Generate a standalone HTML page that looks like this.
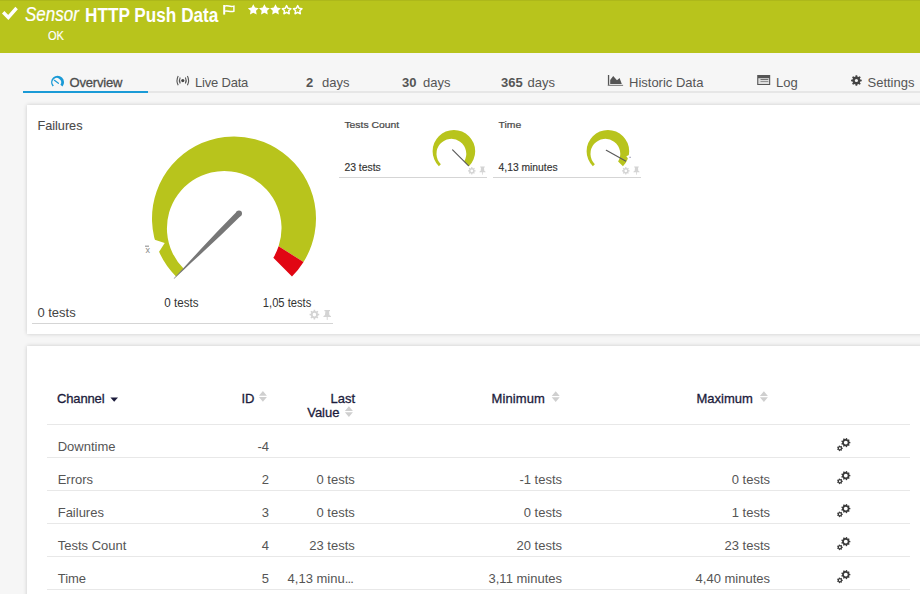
<!DOCTYPE html>
<html><head><meta charset="utf-8"><style>
html,body{margin:0;padding:0;width:920px;height:594px;overflow:hidden;background:#f6f6f6;position:relative}
.t{position:absolute;font-family:"Liberation Sans",sans-serif;white-space:nowrap}
.panel{position:absolute;background:#fff;box-shadow:0 0 4px rgba(0,0,0,0.18)}
</style></head><body>
<div style="position:absolute;left:0;top:0;width:920px;height:53px;background:#b8c41c;border-top:1px solid #adb81a;box-sizing:border-box"></div>
<svg style="position:absolute;left:0;top:0" width="920" height="600" viewBox="0 0 920 600"><path d="M3.2,12.3 L8.3,17.4 L16.6,8" fill="none" stroke="#fff" stroke-width="3.4"/><rect x="223.2" y="5" width="2" height="9.6" fill="#fff"/><path d="M224.8,6.1 C227.5,4.9 229.8,7.3 233.9,6.1 V11.2 C229.8,12.4 227.5,10.1 224.8,11.2" fill="none" stroke="#fff" stroke-width="1.45"/><path d="M253.30,4.20 L254.98,7.59 L258.72,8.14 L256.01,10.78 L256.65,14.51 L253.30,12.75 L249.95,14.51 L250.59,10.78 L247.88,8.14 L251.62,7.59 Z" fill="#fff"/><path d="M264.40,4.20 L266.08,7.59 L269.82,8.14 L267.11,10.78 L267.75,14.51 L264.40,12.75 L261.05,14.51 L261.69,10.78 L258.98,8.14 L262.72,7.59 Z" fill="#fff"/><path d="M275.50,4.20 L277.18,7.59 L280.92,8.14 L278.21,10.78 L278.85,14.51 L275.50,12.75 L272.15,14.51 L272.79,10.78 L270.08,8.14 L273.82,7.59 Z" fill="#fff"/><path d="M286.60,5.60 L287.92,8.28 L290.88,8.71 L288.74,10.80 L289.25,13.74 L286.60,12.35 L283.95,13.74 L284.46,10.80 L282.32,8.71 L285.28,8.28 Z" fill="none" stroke="#fff" stroke-width="1.5" stroke-linejoin="round"/><path d="M297.70,5.60 L299.02,8.28 L301.98,8.71 L299.84,10.80 L300.35,13.74 L297.70,12.35 L295.05,13.74 L295.56,10.80 L293.42,8.71 L296.38,8.28 Z" fill="none" stroke="#fff" stroke-width="1.5" stroke-linejoin="round"/></svg>
<div class="t" style="left:25.00px;top:7.21px;font-size:17px;line-height:17px;font-weight:400;color:#fff;font-style:italic;-webkit-text-stroke:0.2px #fff;transform:scale(1,1.14);transform-origin:0 14.39px;">Sensor</div>
<div class="t" style="left:85.00px;top:7.74px;font-size:17.2px;line-height:17.2px;font-weight:700;color:#fff;font-style:normal;transform:scale(1,1.14);transform-origin:0 14.56px;">HTTP Push Data</div>
<div class="t" style="left:48.00px;top:30.13px;font-size:12.6px;line-height:12.6px;font-weight:400;color:#fff;font-style:normal;-webkit-text-stroke:0.15px #fff;transform:scale(0.88,1);transform-origin:0 10.67px;">OK</div>
<div style="position:absolute;left:23px;top:91px;width:897px;height:2px;background:#e6e6e6"></div>
<div style="position:absolute;left:23px;top:91px;width:125px;height:2px;background:#1a9ad6"></div>
<div class="t" style="left:69.60px;top:76.00px;font-size:13px;line-height:13px;font-weight:400;color:#4d4d4d;font-style:normal;letter-spacing:-0.2px;-webkit-text-stroke:0.3px #4d4d4d;">Overview</div>
<div class="t" style="left:195.00px;top:76.00px;font-size:13px;line-height:13px;font-weight:400;color:#555;font-style:normal;letter-spacing:-0.2px;">Live Data</div>
<div class="t" style="left:306.00px;top:76.00px;font-size:13px;line-height:13px;font-weight:700;color:#555;font-style:normal;">2</div>
<div class="t" style="left:322.00px;top:76.00px;font-size:13px;line-height:13px;font-weight:400;color:#555;font-style:normal;">days</div>
<div class="t" style="left:402.00px;top:76.00px;font-size:13px;line-height:13px;font-weight:700;color:#555;font-style:normal;">30</div>
<div class="t" style="left:423.00px;top:76.00px;font-size:13px;line-height:13px;font-weight:400;color:#555;font-style:normal;">days</div>
<div class="t" style="left:501.00px;top:76.00px;font-size:13px;line-height:13px;font-weight:700;color:#555;font-style:normal;">365</div>
<div class="t" style="left:527.50px;top:76.00px;font-size:13px;line-height:13px;font-weight:400;color:#555;font-style:normal;">days</div>
<div class="t" style="left:629.00px;top:76.00px;font-size:13px;line-height:13px;font-weight:400;color:#555;font-style:normal;">Historic Data</div>
<div class="t" style="left:776.00px;top:76.00px;font-size:13px;line-height:13px;font-weight:400;color:#555;font-style:normal;">Log</div>
<div class="t" style="left:867.50px;top:76.00px;font-size:13px;line-height:13px;font-weight:400;color:#555;font-style:normal;">Settings</div>
<svg style="position:absolute;left:0;top:0" width="920" height="594" viewBox="0 0 920 594"><path d="M52.57,86.53 A6.50,6.50 0 1 1 62.53,86.53 L60.38,84.73 A4.30,4.30 0 1 0 53.84,85.47 Z" fill="#1a9ad6"/><line x1="54.4" y1="80.3" x2="58.4" y2="83.3" stroke="#1a9ad6" stroke-width="1.2" stroke-linecap="round"/><circle cx="182.8" cy="80.6" r="1.6" fill="#444"/><path d="M180.2,77.6 Q178.6,80.6 180.2,83.6 M185.4,77.6 Q187,80.6 185.4,83.6" fill="none" stroke="#555" stroke-width="1.1"/><path d="M178.2,76 Q175.8,80.6 178.2,85.2 M187.4,76 Q189.8,80.6 187.4,85.2" fill="none" stroke="#555" stroke-width="1.1"/><rect x="607.9" y="75" width="1.3" height="11" fill="#555"/><rect x="607.9" y="84.8" width="15.2" height="1.2" fill="#888"/><path d="M610.2,84 L610.2,80 L613.2,76 L617,80.2 L619.6,78 L621.8,84 Z" fill="#555"/><rect x="757.2" y="75" width="13" height="10" fill="#555"/><rect x="758.3" y="78.2" width="10.8" height="5.8" fill="#ddd"/><rect x="760.5" y="79" width="7.8" height="0.9" fill="#666"/><rect x="760.5" y="81" width="7.8" height="0.9" fill="#888"/><path d="M860.29,79.57 L861.73,79.66 L861.73,81.34 L860.29,81.43 L859.81,82.59 L860.77,83.67 L859.57,84.87 L858.49,83.91 L857.33,84.39 L857.24,85.83 L855.56,85.83 L855.47,84.39 L854.31,83.91 L853.23,84.87 L852.03,83.67 L852.99,82.59 L852.51,81.43 L851.07,81.34 L851.07,79.66 L852.51,79.57 L852.99,78.41 L852.03,77.33 L853.23,76.13 L854.31,77.09 L855.47,76.61 L855.56,75.17 L857.24,75.17 L857.33,76.61 L858.49,77.09 L859.57,76.13 L860.77,77.33 L859.81,78.41 Z M858.02,80.50 A1.62,1.62 0 1 0 854.78,80.50 A1.62,1.62 0 1 0 858.02,80.50 Z" fill="#444" fill-rule="evenodd"/></svg>
<div class="panel" style="left:27px;top:105px;width:920px;height:229px"></div>
<div class="panel" style="left:27px;top:346px;width:920px;height:300px"></div>
<div class="t" style="left:37.40px;top:120.25px;font-size:12.7px;line-height:12.7px;font-weight:400;color:#4a4a4a;font-style:normal;-webkit-text-stroke:0.1px #4a4a4a;">Failures</div>
<div class="t" style="left:37.40px;top:305.70px;font-size:13px;line-height:13px;font-weight:400;color:#444;font-style:normal;">0 tests</div>
<div class="t" style="left:164.30px;top:297.38px;font-size:11.6px;line-height:11.6px;font-weight:400;color:#333;font-style:normal;transform:scale(1,1.12);transform-origin:0 9.82px;">0 tests</div>
<div class="t" style="left:262.80px;top:297.72px;font-size:11.2px;line-height:11.2px;font-weight:400;color:#333;font-style:normal;transform:scale(1,1.15);transform-origin:0 9.48px;">1,05 tests</div>
<div style="position:absolute;left:32px;top:323px;width:301px;height:1px;background:#d5d5d5"></div>
<div class="t" style="left:344.40px;top:119.80px;font-size:10.4px;line-height:10.4px;font-weight:400;color:#4a4a4a;font-style:normal;-webkit-text-stroke:0.25px #4a4a4a;transform:scale(1,0.96);transform-origin:0 8.80px;">Tests Count</div>
<div class="t" style="left:344.40px;top:163.20px;font-size:10.4px;line-height:10.4px;font-weight:400;color:#333;font-style:normal;-webkit-text-stroke:0.15px #333;">23 tests</div>
<div style="position:absolute;left:339px;top:177px;width:148px;height:1px;background:#d5d5d5"></div>
<div class="t" style="left:498.60px;top:119.80px;font-size:10.4px;line-height:10.4px;font-weight:400;color:#4a4a4a;font-style:normal;-webkit-text-stroke:0.25px #4a4a4a;transform:scale(1,0.96);transform-origin:0 8.80px;">Time</div>
<div class="t" style="left:498.60px;top:163.28px;font-size:10.3px;line-height:10.3px;font-weight:400;color:#333;font-style:normal;-webkit-text-stroke:0.15px #333;">4,13 minutes</div>
<div style="position:absolute;left:493px;top:177px;width:148px;height:1px;background:#d5d5d5"></div>
<svg style="position:absolute;left:0;top:0" width="920" height="594" viewBox="0 0 920 594"><path d="M176.02,276.48 A82.00,82.00 0 1 1 303.54,261.95 L278.60,246.37 A57.30,57.30 0 1 0 183.72,268.78 Z" fill="#b8c41c"/><path d="M303.54,261.95 A82.00,82.00 0 0 1 291.98,276.48 L273.32,257.82 A57.30,57.30 0 0 0 278.60,246.37 Z" fill="#e10613"/><path d="M164.72,243.03 L150.88,238.40 L156.87,255.34 Z" fill="#fff"/><path d="M236.88,211.38 L218.09,230.87 L200.91,249.05 L189.38,261.56 L182.59,268.92 L173.68,278.39 L174.11,278.82 L183.58,269.91 L190.94,263.12 L203.45,251.59 L221.63,234.41 L241.12,215.62 Z" fill="#777"/><circle cx="239.00" cy="213.50" r="3.0" fill="#777"/><path d="M438.84,166.26 A21.30,21.30 0 1 1 468.96,166.26 L464.12,161.42 A14.89,14.89 0 1 0 440.84,164.26 Z" fill="#b8c41c"/><line x1="452.60" y1="149.90" x2="468.41" y2="165.71" stroke="#5a5a5a" stroke-width="1.15" stroke-linecap="round"/><path d="M592.84,166.26 A21.30,21.30 0 1 1 622.96,166.26 L618.12,161.42 A14.89,14.89 0 1 0 594.84,164.26 Z" fill="#b8c41c"/><path d="M626.30,156.30 L628.56,159.35 L629.80,154.85 Z" fill="#fff"/><line x1="606.30" y1="150.30" x2="625.57" y2="161.12" stroke="#5a5a5a" stroke-width="1.15" stroke-linecap="round"/><rect x="629.3" y="156.8" width="1.6" height="0.9" fill="#8a8aa8"/><path d="M317.93,313.75 L319.24,313.83 L319.24,315.37 L317.93,315.45 L317.49,316.49 L318.36,317.48 L317.28,318.56 L316.29,317.69 L315.25,318.13 L315.17,319.44 L313.63,319.44 L313.55,318.13 L312.51,317.69 L311.52,318.56 L310.44,317.48 L311.31,316.49 L310.87,315.45 L309.56,315.37 L309.56,313.83 L310.87,313.75 L311.31,312.71 L310.44,311.72 L311.52,310.64 L312.51,311.51 L313.55,311.07 L313.63,309.76 L315.17,309.76 L315.25,311.07 L316.29,311.51 L317.28,310.64 L318.36,311.72 L317.49,312.71 Z M316.11,314.60 A1.72,1.72 0 1 0 312.69,314.60 A1.72,1.72 0 1 0 316.11,314.60 Z" fill="#d4d4d4" fill-rule="evenodd"/><path d="M324.40,310.00 L330.00,310.00 L330.00,311.20 L329.00,311.20 L329.40,315.00 L331.00,316.20 L331.00,317.00 L327.70,317.00 L327.60,320.00 L326.80,320.00 L326.70,317.00 L323.40,317.00 L323.40,316.20 L325.00,315.00 L325.40,311.20 L324.40,311.20 Z" fill="#d4d4d4"/><path d="M474.53,170.14 L475.55,170.21 L475.55,171.39 L474.53,171.46 L474.20,172.27 L474.87,173.03 L474.03,173.87 L473.27,173.20 L472.46,173.53 L472.39,174.55 L471.21,174.55 L471.14,173.53 L470.33,173.20 L469.57,173.87 L468.73,173.03 L469.40,172.27 L469.07,171.46 L468.05,171.39 L468.05,170.21 L469.07,170.14 L469.40,169.33 L468.73,168.57 L469.57,167.73 L470.33,168.40 L471.14,168.07 L471.21,167.05 L472.39,167.05 L472.46,168.07 L473.27,168.40 L474.03,167.73 L474.87,168.57 L474.20,169.33 Z M473.13,170.80 A1.33,1.33 0 1 0 470.47,170.80 A1.33,1.33 0 1 0 473.13,170.80 Z" fill="#d4d4d4" fill-rule="evenodd"/><path d="M480.18,166.60 L484.78,166.60 L484.78,167.58 L483.96,167.58 L484.28,170.70 L485.60,171.68 L485.60,172.34 L482.89,172.34 L482.81,174.80 L482.15,174.80 L482.07,172.34 L479.36,172.34 L479.36,171.68 L480.68,170.70 L481.00,167.58 L480.18,167.58 Z" fill="#d4d4d4"/><path d="M628.53,170.14 L629.55,170.21 L629.55,171.39 L628.53,171.46 L628.20,172.27 L628.87,173.03 L628.03,173.87 L627.27,173.20 L626.46,173.53 L626.39,174.55 L625.21,174.55 L625.14,173.53 L624.33,173.20 L623.57,173.87 L622.73,173.03 L623.40,172.27 L623.07,171.46 L622.05,171.39 L622.05,170.21 L623.07,170.14 L623.40,169.33 L622.73,168.57 L623.57,167.73 L624.33,168.40 L625.14,168.07 L625.21,167.05 L626.39,167.05 L626.46,168.07 L627.27,168.40 L628.03,167.73 L628.87,168.57 L628.20,169.33 Z M627.13,170.80 A1.33,1.33 0 1 0 624.47,170.80 A1.33,1.33 0 1 0 627.13,170.80 Z" fill="#d4d4d4" fill-rule="evenodd"/><path d="M634.18,166.60 L638.78,166.60 L638.78,167.58 L637.96,167.58 L638.28,170.70 L639.60,171.68 L639.60,172.34 L636.89,172.34 L636.81,174.80 L636.15,174.80 L636.07,172.34 L633.36,172.34 L633.36,171.68 L634.68,170.70 L635.00,167.58 L634.18,167.58 Z" fill="#d4d4d4"/></svg>
<svg style="position:absolute;left:0;top:0" width="920" height="594"><rect x="145" y="245.7" width="4" height="0.9" fill="#777"/><text x="145.4" y="252.8" font-family="Liberation Sans" font-size="9" fill="#888">x</text></svg>
<div class="t" style="left:57.00px;top:392.00px;font-size:13px;line-height:13px;font-weight:400;color:#1c1c3c;font-style:normal;letter-spacing:-0.15px;-webkit-text-stroke:0.3px #1c1c3c;">Channel</div>
<div class="t" style="left:241.50px;top:392.00px;font-size:13px;line-height:13px;font-weight:400;color:#1c1c3c;font-style:normal;-webkit-text-stroke:0.3px #1c1c3c;">ID</div>
<div class="t" style="right:565.00px;top:392.00px;font-size:13px;line-height:13px;font-weight:400;color:#1c1c3c;font-style:normal;-webkit-text-stroke:0.3px #1c1c3c;">Last</div>
<div class="t" style="left:307.20px;top:406.00px;font-size:13px;line-height:13px;font-weight:400;color:#1c1c3c;font-style:normal;-webkit-text-stroke:0.3px #1c1c3c;">Value</div>
<div class="t" style="left:491.60px;top:392.00px;font-size:13px;line-height:13px;font-weight:400;color:#1c1c3c;font-style:normal;letter-spacing:0.1px;-webkit-text-stroke:0.3px #1c1c3c;">Minimum</div>
<div class="t" style="left:696.50px;top:392.00px;font-size:13px;line-height:13px;font-weight:400;color:#1c1c3c;font-style:normal;-webkit-text-stroke:0.3px #1c1c3c;">Maximum</div>
<svg style="position:absolute;left:0;top:0" width="920" height="594" viewBox="0 0 920 594"><path d="M110.4,397.4 H118 L114.2,401.7 Z" fill="#1c1c3c"/><path d="M258.9,395.8 L262.9,391 L266.9,395.8 Z M258.9,397 L262.9,401.7 L266.9,397 Z" fill="#cfcfcf"/><path d="M344.9,411.1 L348.9,406.3 L352.9,411.1 Z M344.9,412.3 L348.9,417.0 L352.9,412.3 Z" fill="#cfcfcf"/><path d="M551.7,396.1 L555.7,391.3 L559.7,396.1 Z M551.7,397.3 L555.7,402.0 L559.7,397.3 Z" fill="#cfcfcf"/><path d="M759.9,396.1 L763.9,391.3 L767.9,396.1 Z M759.9,397.3 L763.9,402.0 L767.9,397.3 Z" fill="#cfcfcf"/><rect x="47" y="424" width="863" height="1" fill="#e8e8e8"/><rect x="47" y="457" width="863" height="1" fill="#e8e8e8"/><rect x="47" y="490" width="863" height="1" fill="#e8e8e8"/><rect x="47" y="523" width="863" height="1" fill="#e8e8e8"/><rect x="47" y="556" width="863" height="1" fill="#e8e8e8"/><rect x="47" y="589" width="863" height="1" fill="#e8e8e8"/><path d="M849.40,441.83 L850.36,441.96 L850.36,443.24 L849.40,443.37 L849.05,444.33 L849.70,445.04 L848.88,446.02 L848.07,445.50 L847.18,446.01 L847.22,446.97 L845.96,447.20 L845.67,446.28 L844.66,446.10 L844.08,446.87 L842.97,446.22 L843.34,445.33 L842.68,444.55 L841.74,444.76 L841.30,443.56 L842.16,443.11 L842.16,442.09 L841.30,441.64 L841.74,440.44 L842.68,440.65 L843.34,439.87 L842.97,438.98 L844.08,438.33 L844.66,439.10 L845.67,438.92 L845.96,438.00 L847.22,438.23 L847.18,439.19 L848.07,439.70 L848.88,439.18 L849.70,440.16 L849.05,440.87 Z M847.73,442.60 A1.93,1.93 0 1 0 843.87,442.60 A1.93,1.93 0 1 0 847.73,442.60 Z" fill="#3a3a3a" fill-rule="evenodd"/><path d="M842.08,447.70 L842.75,447.78 L842.75,448.82 L842.08,448.90 L841.73,449.63 L842.08,450.21 L841.27,450.85 L840.79,450.38 L840.00,450.56 L839.77,451.20 L838.76,450.97 L838.83,450.29 L838.20,449.79 L837.55,450.00 L837.10,449.07 L837.67,448.70 L837.67,447.90 L837.10,447.53 L837.55,446.60 L838.20,446.81 L838.83,446.31 L838.76,445.63 L839.77,445.40 L840.00,446.04 L840.79,446.22 L841.27,445.75 L842.08,446.39 L841.73,446.97 Z M840.86,448.30 A0.96,0.96 0 1 0 838.94,448.30 A0.96,0.96 0 1 0 840.86,448.30 Z" fill="#3a3a3a" fill-rule="evenodd"/><path d="M849.40,474.83 L850.36,474.96 L850.36,476.24 L849.40,476.37 L849.05,477.33 L849.70,478.04 L848.88,479.02 L848.07,478.50 L847.18,479.01 L847.22,479.97 L845.96,480.20 L845.67,479.28 L844.66,479.10 L844.08,479.87 L842.97,479.22 L843.34,478.33 L842.68,477.55 L841.74,477.76 L841.30,476.56 L842.16,476.11 L842.16,475.09 L841.30,474.64 L841.74,473.44 L842.68,473.65 L843.34,472.87 L842.97,471.98 L844.08,471.33 L844.66,472.10 L845.67,471.92 L845.96,471.00 L847.22,471.23 L847.18,472.19 L848.07,472.70 L848.88,472.18 L849.70,473.16 L849.05,473.87 Z M847.73,475.60 A1.93,1.93 0 1 0 843.87,475.60 A1.93,1.93 0 1 0 847.73,475.60 Z" fill="#3a3a3a" fill-rule="evenodd"/><path d="M842.08,480.70 L842.75,480.78 L842.75,481.82 L842.08,481.90 L841.73,482.63 L842.08,483.21 L841.27,483.85 L840.79,483.38 L840.00,483.56 L839.77,484.20 L838.76,483.97 L838.83,483.29 L838.20,482.79 L837.55,483.00 L837.10,482.07 L837.67,481.70 L837.67,480.90 L837.10,480.53 L837.55,479.60 L838.20,479.81 L838.83,479.31 L838.76,478.63 L839.77,478.40 L840.00,479.04 L840.79,479.22 L841.27,478.75 L842.08,479.39 L841.73,479.97 Z M840.86,481.30 A0.96,0.96 0 1 0 838.94,481.30 A0.96,0.96 0 1 0 840.86,481.30 Z" fill="#3a3a3a" fill-rule="evenodd"/><path d="M849.40,507.83 L850.36,507.96 L850.36,509.24 L849.40,509.37 L849.05,510.33 L849.70,511.04 L848.88,512.02 L848.07,511.50 L847.18,512.01 L847.22,512.97 L845.96,513.20 L845.67,512.28 L844.66,512.10 L844.08,512.87 L842.97,512.22 L843.34,511.33 L842.68,510.55 L841.74,510.76 L841.30,509.56 L842.16,509.11 L842.16,508.09 L841.30,507.64 L841.74,506.44 L842.68,506.65 L843.34,505.87 L842.97,504.98 L844.08,504.33 L844.66,505.10 L845.67,504.92 L845.96,504.00 L847.22,504.23 L847.18,505.19 L848.07,505.70 L848.88,505.18 L849.70,506.16 L849.05,506.87 Z M847.73,508.60 A1.93,1.93 0 1 0 843.87,508.60 A1.93,1.93 0 1 0 847.73,508.60 Z" fill="#3a3a3a" fill-rule="evenodd"/><path d="M842.08,513.70 L842.75,513.78 L842.75,514.82 L842.08,514.90 L841.73,515.63 L842.08,516.21 L841.27,516.85 L840.79,516.38 L840.00,516.56 L839.77,517.20 L838.76,516.97 L838.83,516.29 L838.20,515.79 L837.55,516.00 L837.10,515.07 L837.67,514.70 L837.67,513.90 L837.10,513.53 L837.55,512.60 L838.20,512.81 L838.83,512.31 L838.76,511.63 L839.77,511.40 L840.00,512.04 L840.79,512.22 L841.27,511.75 L842.08,512.39 L841.73,512.97 Z M840.86,514.30 A0.96,0.96 0 1 0 838.94,514.30 A0.96,0.96 0 1 0 840.86,514.30 Z" fill="#3a3a3a" fill-rule="evenodd"/><path d="M849.40,540.83 L850.36,540.96 L850.36,542.24 L849.40,542.37 L849.05,543.33 L849.70,544.04 L848.88,545.02 L848.07,544.50 L847.18,545.01 L847.22,545.97 L845.96,546.20 L845.67,545.28 L844.66,545.10 L844.08,545.87 L842.97,545.22 L843.34,544.33 L842.68,543.55 L841.74,543.76 L841.30,542.56 L842.16,542.11 L842.16,541.09 L841.30,540.64 L841.74,539.44 L842.68,539.65 L843.34,538.87 L842.97,537.98 L844.08,537.33 L844.66,538.10 L845.67,537.92 L845.96,537.00 L847.22,537.23 L847.18,538.19 L848.07,538.70 L848.88,538.18 L849.70,539.16 L849.05,539.87 Z M847.73,541.60 A1.93,1.93 0 1 0 843.87,541.60 A1.93,1.93 0 1 0 847.73,541.60 Z" fill="#3a3a3a" fill-rule="evenodd"/><path d="M842.08,546.70 L842.75,546.78 L842.75,547.82 L842.08,547.90 L841.73,548.63 L842.08,549.21 L841.27,549.85 L840.79,549.38 L840.00,549.56 L839.77,550.20 L838.76,549.97 L838.83,549.29 L838.20,548.79 L837.55,549.00 L837.10,548.07 L837.67,547.70 L837.67,546.90 L837.10,546.53 L837.55,545.60 L838.20,545.81 L838.83,545.31 L838.76,544.63 L839.77,544.40 L840.00,545.04 L840.79,545.22 L841.27,544.75 L842.08,545.39 L841.73,545.97 Z M840.86,547.30 A0.96,0.96 0 1 0 838.94,547.30 A0.96,0.96 0 1 0 840.86,547.30 Z" fill="#3a3a3a" fill-rule="evenodd"/><path d="M849.40,573.83 L850.36,573.96 L850.36,575.24 L849.40,575.37 L849.05,576.33 L849.70,577.04 L848.88,578.02 L848.07,577.50 L847.18,578.01 L847.22,578.97 L845.96,579.20 L845.67,578.28 L844.66,578.10 L844.08,578.87 L842.97,578.22 L843.34,577.33 L842.68,576.55 L841.74,576.76 L841.30,575.56 L842.16,575.11 L842.16,574.09 L841.30,573.64 L841.74,572.44 L842.68,572.65 L843.34,571.87 L842.97,570.98 L844.08,570.33 L844.66,571.10 L845.67,570.92 L845.96,570.00 L847.22,570.23 L847.18,571.19 L848.07,571.70 L848.88,571.18 L849.70,572.16 L849.05,572.87 Z M847.73,574.60 A1.93,1.93 0 1 0 843.87,574.60 A1.93,1.93 0 1 0 847.73,574.60 Z" fill="#3a3a3a" fill-rule="evenodd"/><path d="M842.08,579.70 L842.75,579.78 L842.75,580.82 L842.08,580.90 L841.73,581.63 L842.08,582.21 L841.27,582.85 L840.79,582.38 L840.00,582.56 L839.77,583.20 L838.76,582.97 L838.83,582.29 L838.20,581.79 L837.55,582.00 L837.10,581.07 L837.67,580.70 L837.67,579.90 L837.10,579.53 L837.55,578.60 L838.20,578.81 L838.83,578.31 L838.76,577.63 L839.77,577.40 L840.00,578.04 L840.79,578.22 L841.27,577.75 L842.08,578.39 L841.73,578.97 Z M840.86,580.30 A0.96,0.96 0 1 0 838.94,580.30 A0.96,0.96 0 1 0 840.86,580.30 Z" fill="#3a3a3a" fill-rule="evenodd"/></svg>
<div class="t" style="left:57.70px;top:440.00px;font-size:13px;line-height:13px;font-weight:400;color:#555;font-style:normal;">Downtime</div>
<div class="t" style="right:651.00px;top:440.00px;font-size:13px;line-height:13px;font-weight:400;color:#555;font-style:normal;">-4</div>
<div class="t" style="left:57.70px;top:473.00px;font-size:13px;line-height:13px;font-weight:400;color:#555;font-style:normal;">Errors</div>
<div class="t" style="right:651.00px;top:473.00px;font-size:13px;line-height:13px;font-weight:400;color:#555;font-style:normal;">2</div>
<div class="t" style="right:565.20px;top:473.00px;font-size:13px;line-height:13px;font-weight:400;color:#555;font-style:normal;">0 tests</div>
<div class="t" style="right:358.00px;top:473.00px;font-size:13px;line-height:13px;font-weight:400;color:#555;font-style:normal;">-1 tests</div>
<div class="t" style="right:150.00px;top:473.00px;font-size:13px;line-height:13px;font-weight:400;color:#555;font-style:normal;">0 tests</div>
<div class="t" style="left:57.70px;top:506.00px;font-size:13px;line-height:13px;font-weight:400;color:#555;font-style:normal;">Failures</div>
<div class="t" style="right:651.00px;top:506.00px;font-size:13px;line-height:13px;font-weight:400;color:#555;font-style:normal;">3</div>
<div class="t" style="right:565.20px;top:506.00px;font-size:13px;line-height:13px;font-weight:400;color:#555;font-style:normal;">0 tests</div>
<div class="t" style="right:358.00px;top:506.00px;font-size:13px;line-height:13px;font-weight:400;color:#555;font-style:normal;">0 tests</div>
<div class="t" style="right:150.00px;top:506.00px;font-size:13px;line-height:13px;font-weight:400;color:#555;font-style:normal;">1 tests</div>
<div class="t" style="left:57.70px;top:539.00px;font-size:13px;line-height:13px;font-weight:400;color:#555;font-style:normal;">Tests Count</div>
<div class="t" style="right:651.00px;top:539.00px;font-size:13px;line-height:13px;font-weight:400;color:#555;font-style:normal;">4</div>
<div class="t" style="right:565.20px;top:539.00px;font-size:13px;line-height:13px;font-weight:400;color:#555;font-style:normal;">23 tests</div>
<div class="t" style="right:358.00px;top:539.00px;font-size:13px;line-height:13px;font-weight:400;color:#555;font-style:normal;">20 tests</div>
<div class="t" style="right:150.00px;top:539.00px;font-size:13px;line-height:13px;font-weight:400;color:#555;font-style:normal;">23 tests</div>
<div class="t" style="left:57.70px;top:572.00px;font-size:13px;line-height:13px;font-weight:400;color:#555;font-style:normal;">Time</div>
<div class="t" style="right:651.00px;top:572.00px;font-size:13px;line-height:13px;font-weight:400;color:#555;font-style:normal;">5</div>
<div class="t" style="right:567.00px;top:572.00px;font-size:13px;line-height:13px;font-weight:400;color:#555;font-style:normal;">4,13 minu<span style="letter-spacing:-0.85px">...</span></div>
<div class="t" style="right:358.00px;top:572.00px;font-size:13px;line-height:13px;font-weight:400;color:#555;font-style:normal;">3,11 minutes</div>
<div class="t" style="right:150.00px;top:572.00px;font-size:13px;line-height:13px;font-weight:400;color:#555;font-style:normal;">4,40 minutes</div>
</body></html>
